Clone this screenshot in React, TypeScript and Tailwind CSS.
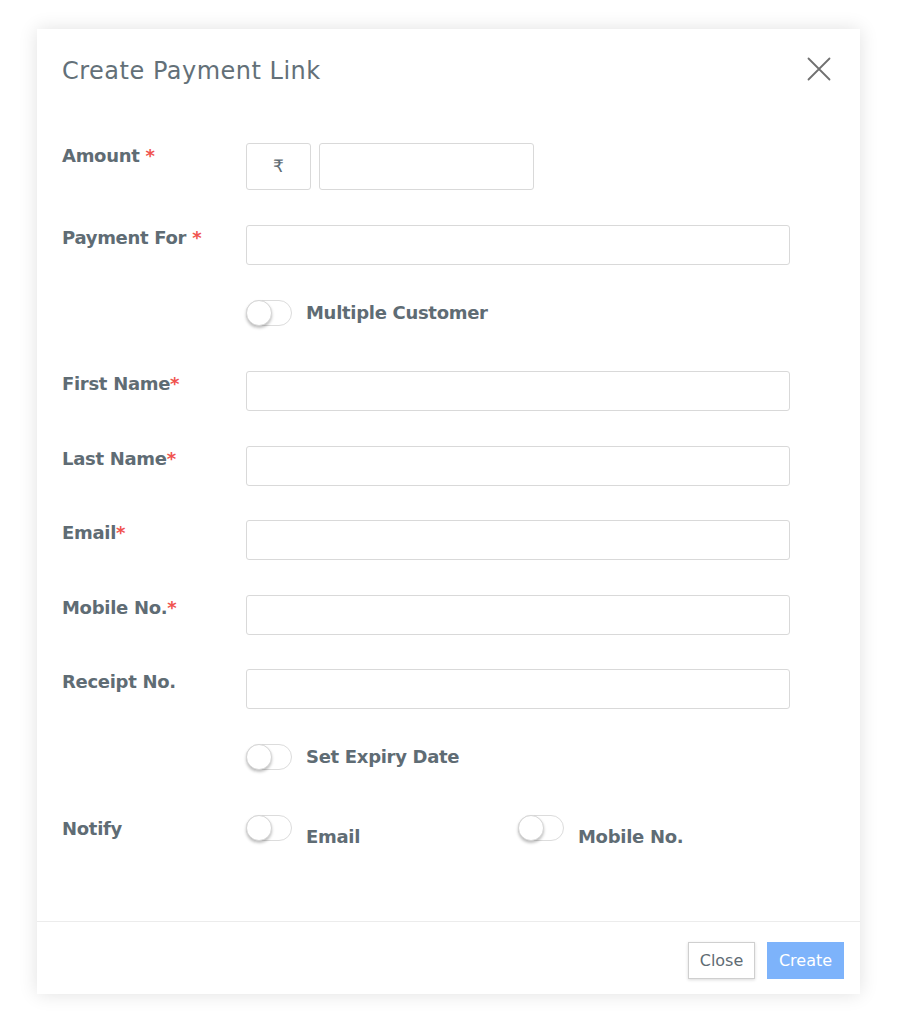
function Req() {
  return <span className="text-[#f0534f]">*</span>;
}

function Row({ label, children, className }: { label?: React.ReactNode; children: React.ReactNode; className?: string }) {
  return (
    <div className={`flex ${className ?? ""}`}>
      <div className="w-[184px] shrink-0 pt-[1px] text-[18px] leading-[24px] font-bold tracking-[-0.3px] text-[#5f6c74]">{label}</div>
      <div className="flex-1">{children}</div>
    </div>
  );
}

function Field() {
  return <input className="block h-[40px] w-[544px] rounded-[3px] border border-[#d9d9d9] bg-white px-3 outline-none" />;
}

function Toggle() {
  return (
    <div className="relative h-[26px] w-[46px] shrink-0 rounded-full border border-[#dcdcdc] bg-white">
      <div className="absolute -left-[1px] -top-[1px] h-[26px] w-[26px] rounded-full border border-[#d6d6d6] bg-white shadow-[0_2px_3px_rgba(0,0,0,0.25)]" />
    </div>
  );
}

const labelText = "text-[18px] leading-[24px] font-bold tracking-[-0.3px] text-[#5f6c74]";

export default function App() {
  return (
    <div className="min-h-screen bg-white pt-[29px] pl-[37px]" style={{ fontFamily: "'DejaVu Sans', sans-serif" }}>
      <div className="w-[823px] bg-white shadow-[0_0_18px_rgba(0,0,0,0.12)]">
        <div className="flex items-start justify-between pl-[25px] pr-[29px] pt-[26px]">
          <h1 className="text-[24px] leading-[32px] font-normal tracking-[0.5px] text-[#637078]">Create Payment Link</h1>
          <svg className="mt-[2px]" width="24" height="24" viewBox="0 0 24 24" fill="none" stroke="#707070" strokeWidth="1.8" strokeLinecap="round">
            <path d="M1.5 1.5 L22.5 22.5 M22.5 1.5 L1.5 22.5" />
          </svg>
        </div>

        <div className="pl-[25px] pb-[72px] pt-[56px]">
          <Row label={<>Amount <Req /></>}>
            <div className="flex gap-[8px]">
              <div className="flex h-[47px] w-[65px] items-center justify-center rounded-[3px] border border-[#d9d9d9] text-[17px] text-[#5f6c74]">₹</div>
              <input className="h-[47px] w-[215px] rounded-[3px] border border-[#d9d9d9] outline-none" />
            </div>
          </Row>

          <Row className="mt-[35px]" label={<>Payment For <Req /></>}>
            <Field />
          </Row>

          <Row className="mt-[35px]">
            <div className="flex items-center gap-[14px]">
              <Toggle />
              <span className={labelText}>Multiple Customer</span>
            </div>
          </Row>

          <Row className="mt-[45px]" label={<>First Name<Req /></>}>
            <Field />
          </Row>
          <Row className="mt-[35px]" label={<>Last Name<Req /></>}>
            <Field />
          </Row>
          <Row className="mt-[34px]" label={<>Email<Req /></>}>
            <Field />
          </Row>
          <Row className="mt-[35px]" label={<>Mobile No.<Req /></>}>
            <Field />
          </Row>
          <Row className="mt-[34px]" label="Receipt No.">
            <Field />
          </Row>

          <Row className="mt-[35px]">
            <div className="flex items-center gap-[14px]">
              <Toggle />
              <span className={labelText}>Set Expiry Date</span>
            </div>
          </Row>

          <Row className="mt-[45px]" label={<div className="pt-[1px]">Notify</div>}>
            <div className="flex">
              <div className="flex w-[272px] items-start gap-[14px]">
                <Toggle />
                <span className={`mt-[10px] ${labelText}`}>Email</span>
              </div>
              <div className="flex items-start gap-[14px]">
                <Toggle />
                <span className={`mt-[10px] ${labelText}`}>Mobile No.</span>
              </div>
            </div>
          </Row>
        </div>

        <div className="flex justify-end gap-[12px] border-t border-[#ececec] pt-[20px] pb-[15px] pr-[16px]">
          <button className="h-[37px] w-[67px] border border-[#cfcfcf] bg-white text-[16px] text-[#5f6c74] shadow-[0_1px_3px_rgba(0,0,0,0.15)]">Close</button>
          <button className="h-[37px] w-[77px] bg-[#7db3fb] text-[16px] text-white">Create</button>
        </div>
      </div>
    </div>
  );
}
